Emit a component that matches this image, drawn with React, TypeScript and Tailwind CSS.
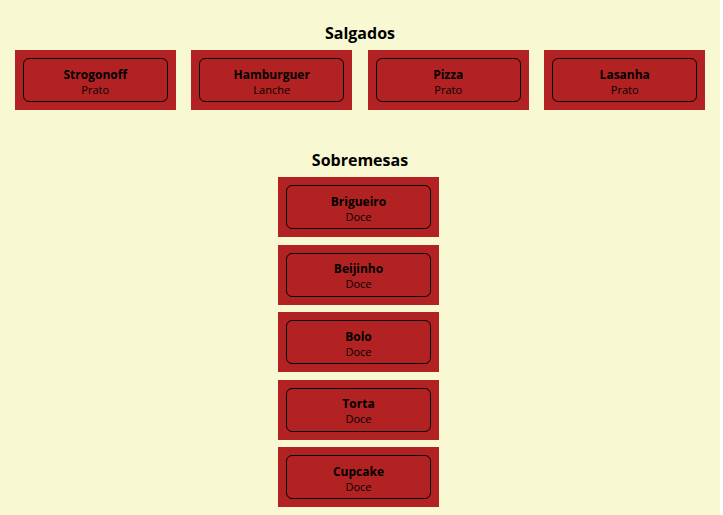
const salgados = [
  { nome: "Strogonoff", tipo: "Prato" },
  { nome: "Hamburguer", tipo: "Lanche" },
  { nome: "Pizza", tipo: "Prato" },
  { nome: "Lasanha", tipo: "Prato" },
];

const sobremesas = [
  { nome: "Brigueiro", tipo: "Doce" },
  { nome: "Beijinho", tipo: "Doce" },
  { nome: "Bolo", tipo: "Doce" },
  { nome: "Torta", tipo: "Doce" },
  { nome: "Cupcake", tipo: "Doce" },
];

function Card({ nome, tipo }: { nome: string; tipo: string }) {
  return (
    <div className="w-[161px] bg-[#b22222] p-2">
      <div className="h-[44px] pt-[3px] border border-black rounded-md flex flex-col items-center justify-center text-black">
        <div className="text-[12px] font-bold leading-[16px]">{nome}</div>
        <div className="text-[11px] leading-[14px]">{tipo}</div>
      </div>
    </div>
  );
}

export default function App() {
  return (
    <div
      className="min-h-screen w-[720px] bg-[#f8f8d2] pt-[22px]"
      style={{ fontFamily: '"Open Sans", sans-serif' }}
    >
      <h2 className="text-center text-[16px] font-bold leading-[22px] text-black">Salgados</h2>
      <div className="mt-[6px] flex justify-center gap-[15.5px]">
        {salgados.map((s) => (
          <Card key={s.nome} {...s} />
        ))}
      </div>

      <h2 className="mt-[39px] text-center text-[16px] font-bold leading-[22px] text-black">Sobremesas</h2>
      <div className="mt-[6px] pr-[3px] flex flex-col items-center gap-[7.5px]">
        {sobremesas.map((s) => (
          <Card key={s.nome} {...s} />
        ))}
      </div>
    </div>
  );
}
